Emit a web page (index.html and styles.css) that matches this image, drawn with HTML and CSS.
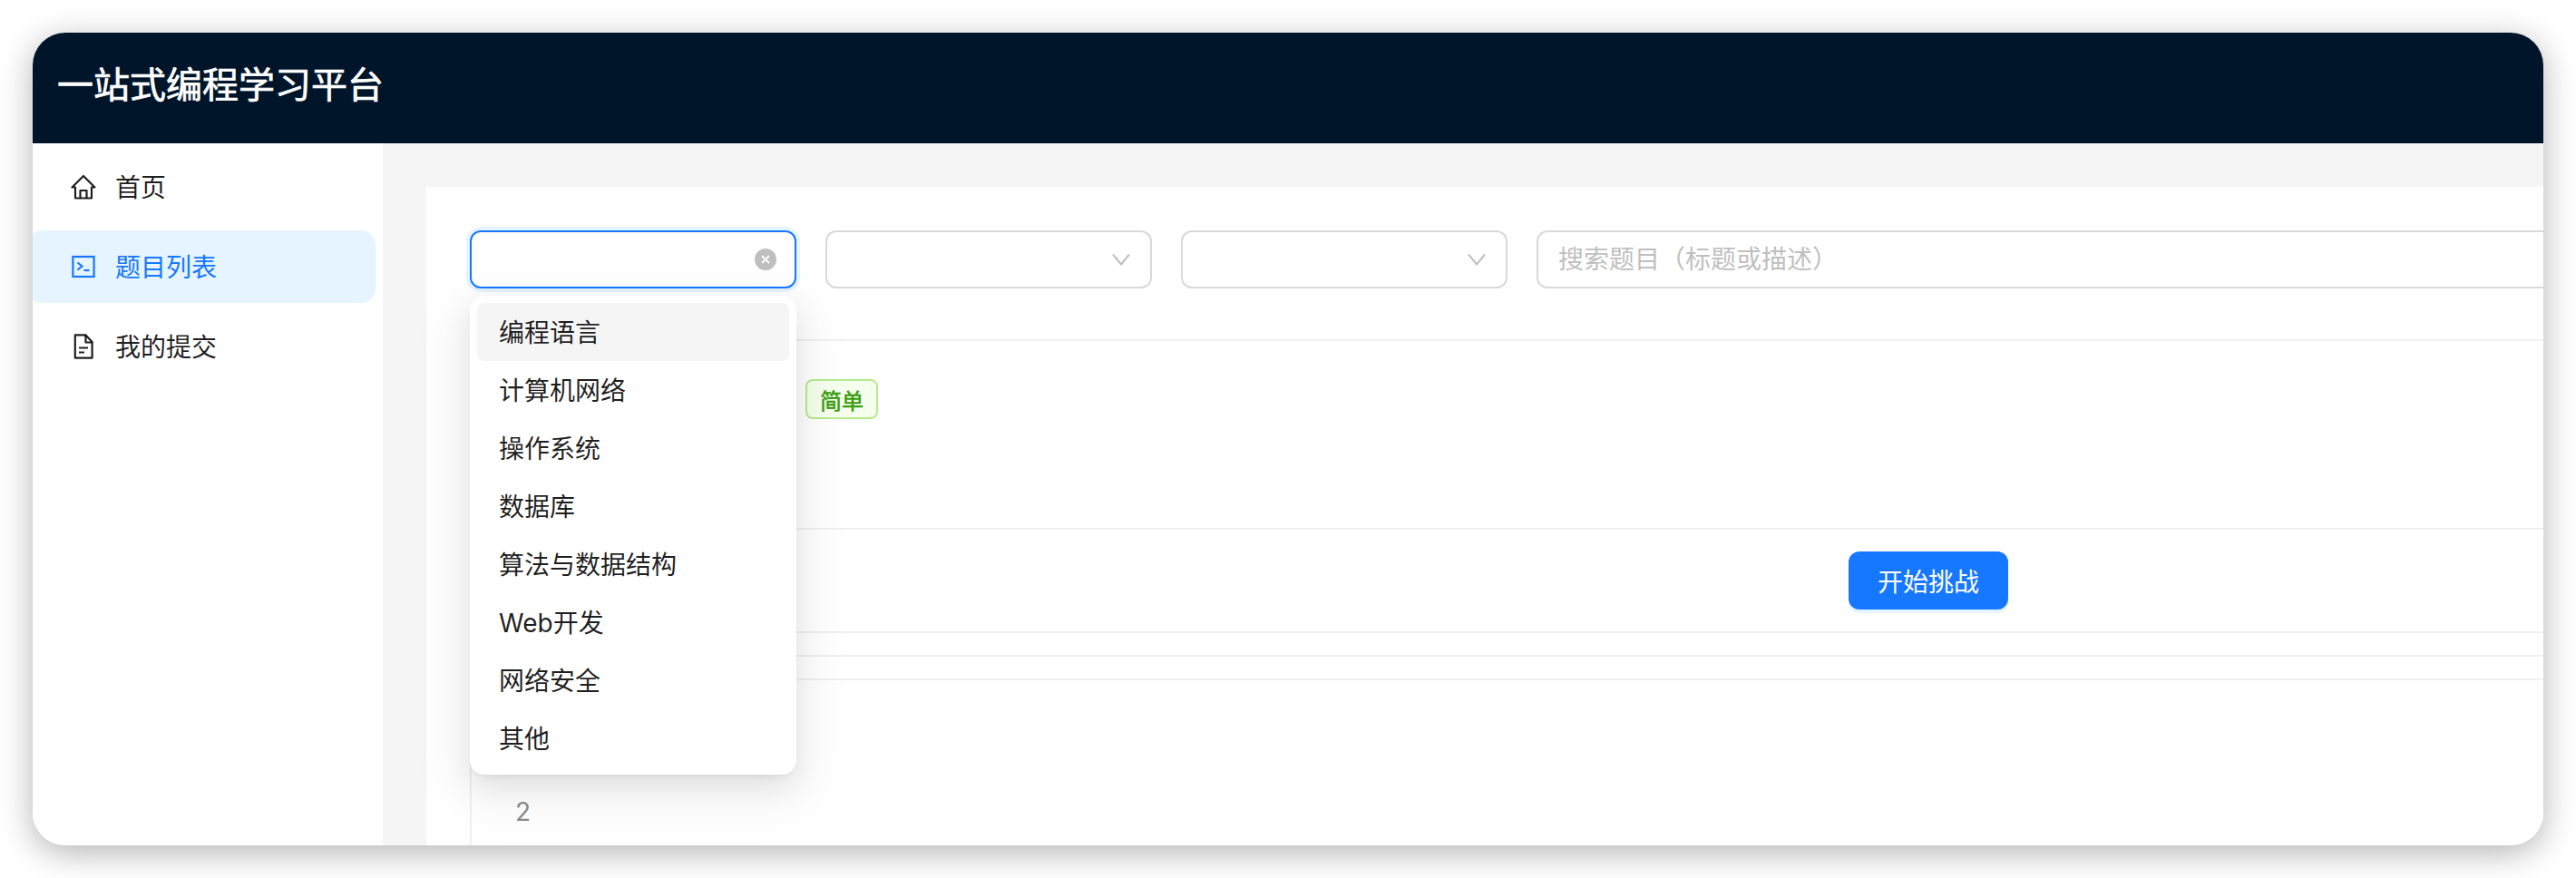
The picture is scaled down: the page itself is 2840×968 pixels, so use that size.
FILE: index.html
```html
<!DOCTYPE html>
<html lang="zh-CN">
<head>
<meta charset="utf-8">
<title>一站式编程学习平台</title>
<link rel="stylesheet" href="styles.css">
</head>
<body>
<div class="window">
  <header class="topbar"><span class="brand">一站式编程学习平台</span></header>
  <div class="body-row">
    <nav class="sidebar">
      <a class="nav-item">
        <svg class="nav-icon" viewBox="0 0 28 28" fill="none" stroke="currentColor" stroke-width="2.2" stroke-linejoin="round"><path d="M14 2 1.500 14.500H5V26.500H23V14.500H26.500Z"/><path d="M10.500 26.500V18H17.500V26.500"/></svg>
        <span>首页</span>
      </a>
      <a class="nav-item active">
        <svg class="nav-icon" viewBox="0 0 28 28" fill="none" stroke="currentColor" stroke-width="2.2"><rect x="2.400" y="3" width="23.200" height="22"/><path d="M7.500 9.500 12.500 13.500 7.500 17.500"/><path d="M14.500 18H20.500"/></svg>
        <span>题目列表</span>
      </a>
      <a class="nav-item">
        <svg class="nav-icon" viewBox="0 0 28 28" fill="none" stroke="currentColor" stroke-width="2.2" stroke-linejoin="round"><path d="M4.800 1.400H16.500L23.600 9V26.600H4.800Z"/><path d="M16.500 1.400V9.500H23.600"/><path d="M9 15.500H19M9 20.500H15"/></svg>
        <span>我的提交</span>
      </a>
    </nav>
    <main class="content">
      <section class="card">
        <div class="filters">
          <div class="select focused">
            <svg class="clear" viewBox="0 0 24 24"><circle cx="12" cy="12" r="12" fill="#bfbfbf"/><path d="m8 8 8 8M16 8l-8 8" stroke="#fff" stroke-width="1.800" fill="none"/></svg>
            <ul class="dropdown">
              <li class="option hover">编程语言</li>
              <li class="option">计算机网络</li>
              <li class="option">操作系统</li>
              <li class="option">数据库</li>
              <li class="option">算法与数据结构</li>
              <li class="option">Web开发</li>
              <li class="option">网络安全</li>
              <li class="option">其他</li>
            </ul>
          </div>
          <div class="select">
            <svg class="chevron" viewBox="0 0 20 14" fill="none" stroke="#bfbfbf" stroke-width="2"><path d="m1 1.500 9 11 9-11"/></svg>
          </div>
          <div class="select">
            <svg class="chevron" viewBox="0 0 20 14" fill="none" stroke="#bfbfbf" stroke-width="2"><path d="m1 1.500 9 11 9-11"/></svg>
          </div>
          <div class="search"><span class="placeholder">搜索题目（标题或描述）</span></div>
        </div>
        <div class="table">
          <div class="row row-tag"><span class="tag">简单</span></div>
          <div class="row row-action"><button class="btn-primary" type="button">开始挑战</button></div>
          <div class="row row-thin"></div>
          <div class="row row-thin"></div>
          <div class="row-number"><span class="cell-number">2</span></div>
        </div>
      </section>
    </main>
  </div>
</div>
</body>
</html>
```

FILE: styles.css
```css
* { box-sizing: border-box; }
html, body { margin: 0; height: 100%; background: #fff; }
body {
  padding: 36px;
  font-family: Inter, "Noto Sans CJK SC", sans-serif;
  font-size: 28px;
  color: rgba(0, 0, 0, 0.88);
  overflow: hidden;
}
.window {
  width: 2768px;
  height: 896px;
  border-radius: 36px;
  overflow: hidden;
  background: #fff;
  display: flex;
  flex-direction: column;
  box-shadow: 0 8px 36px rgba(0, 0, 0, 0.3);
}
.topbar {
  height: 122px;
  flex: none;
  background: #001529;
  display: flex;
  align-items: center;
  padding-left: 27px;
}
.brand { color: #fff; font-size: 40px; font-weight: 400; -webkit-text-stroke: 0.7px #fff; line-height: 48px; margin-top: -6px; }
.body-row { flex: 1; min-height: 0; display: flex; }
.sidebar {
  width: 386px;
  flex: none;
  background: #fff;
  padding: 8px 8px 0 0;
  display: flex;
  flex-direction: column;
  gap: 8px;
}
.nav-item {
  height: 80px;
  margin-left: -6px;
  display: flex;
  align-items: center;
  gap: 21px;
  padding: 2px 0 0 48px;
  border-radius: 16px;
  line-height: 44px;
}
.nav-item .nav-icon { margin-top: -2px; }
.nav-item.active { background: #e6f4ff; color: #1677ff; }
.nav-icon { width: 28px; height: 28px; flex: none; }
.content {
  flex: 1;
  min-width: 0;
  background: #f5f5f5;
  padding: 48px 0 0 48px;
  display: flex;
}
.card { flex: 1; min-width: 0; background: #fff; padding: 48px 0 0 48px; }
.filters { display: flex; gap: 32px; height: 64px; }
.select, .search {
  height: 64px;
  flex: none;
  border: 2px solid #d9d9d9;
  border-radius: 12px;
  background: #fff;
  position: relative;
  display: flex;
  align-items: center;
}
.select { width: 360px; justify-content: flex-end; padding-right: 22px; }
.select.focused { border-color: #1677ff; box-shadow: 0 0 0 4px rgba(5, 145, 255, 0.1); padding-right: 20px; }
.search { width: 1300px; padding-left: 22px; }
.placeholder { color: #bfbfbf; line-height: 44px; }
.clear { width: 24px; height: 24px; }
.chevron { width: 20px; height: 14px; }
.dropdown {
  position: absolute;
  z-index: 5;
  top: 70px;
  left: -2px;
  width: 360px;
  margin: 0;
  padding: 8px;
  list-style: none;
  background: #fff;
  border-radius: 16px;
  box-shadow: 0 12px 32px rgba(0, 0, 0, 0.08), 0 6px 12px -8px rgba(0, 0, 0, 0.12), 0 18px 56px 16px rgba(0, 0, 0, 0.05);
}
.option { height: 64px; padding: 0 24px 2px; display: flex; align-items: center; border-radius: 8px; }
.option.hover { background: #f5f5f5; }
.table { margin-top: 56px; }
.row { border-top: 2px solid #f0f0f0; }
.row-tag { height: 208px; padding: 42px 0 0 370px; }
.row-action { height: 114px; padding: 24px 0 0 1520px; }
.row-thin { height: 26px; }
.tag {
  display: inline-flex;
  align-items: center;
  justify-content: center;
  width: 80px;
  height: 44px;
  font-size: 24px;
  font-weight: 400;
  -webkit-text-stroke: 0.6px #389e0d;
  color: #389e0d;
  background: #f6ffed;
  border: 2px solid #b7eb8f;
  border-radius: 8px;
}
.btn-primary {
  width: 176px;
  height: 64px;
  padding: 0;
  border: 0;
  border-radius: 12px;
  background: #1677ff;
  color: #fff;
  font: inherit;
  box-shadow: 0 4px 0 rgba(5, 145, 255, 0.1);
}
.row-number {
  border-top: 2px solid #f0f0f0;
  border-left: 2px solid #f0f0f0;
  height: 200px;
  padding: 123px 0 0 48px;
  color: #8c8c8c;
}
.cell-number { line-height: 44px; }
```
